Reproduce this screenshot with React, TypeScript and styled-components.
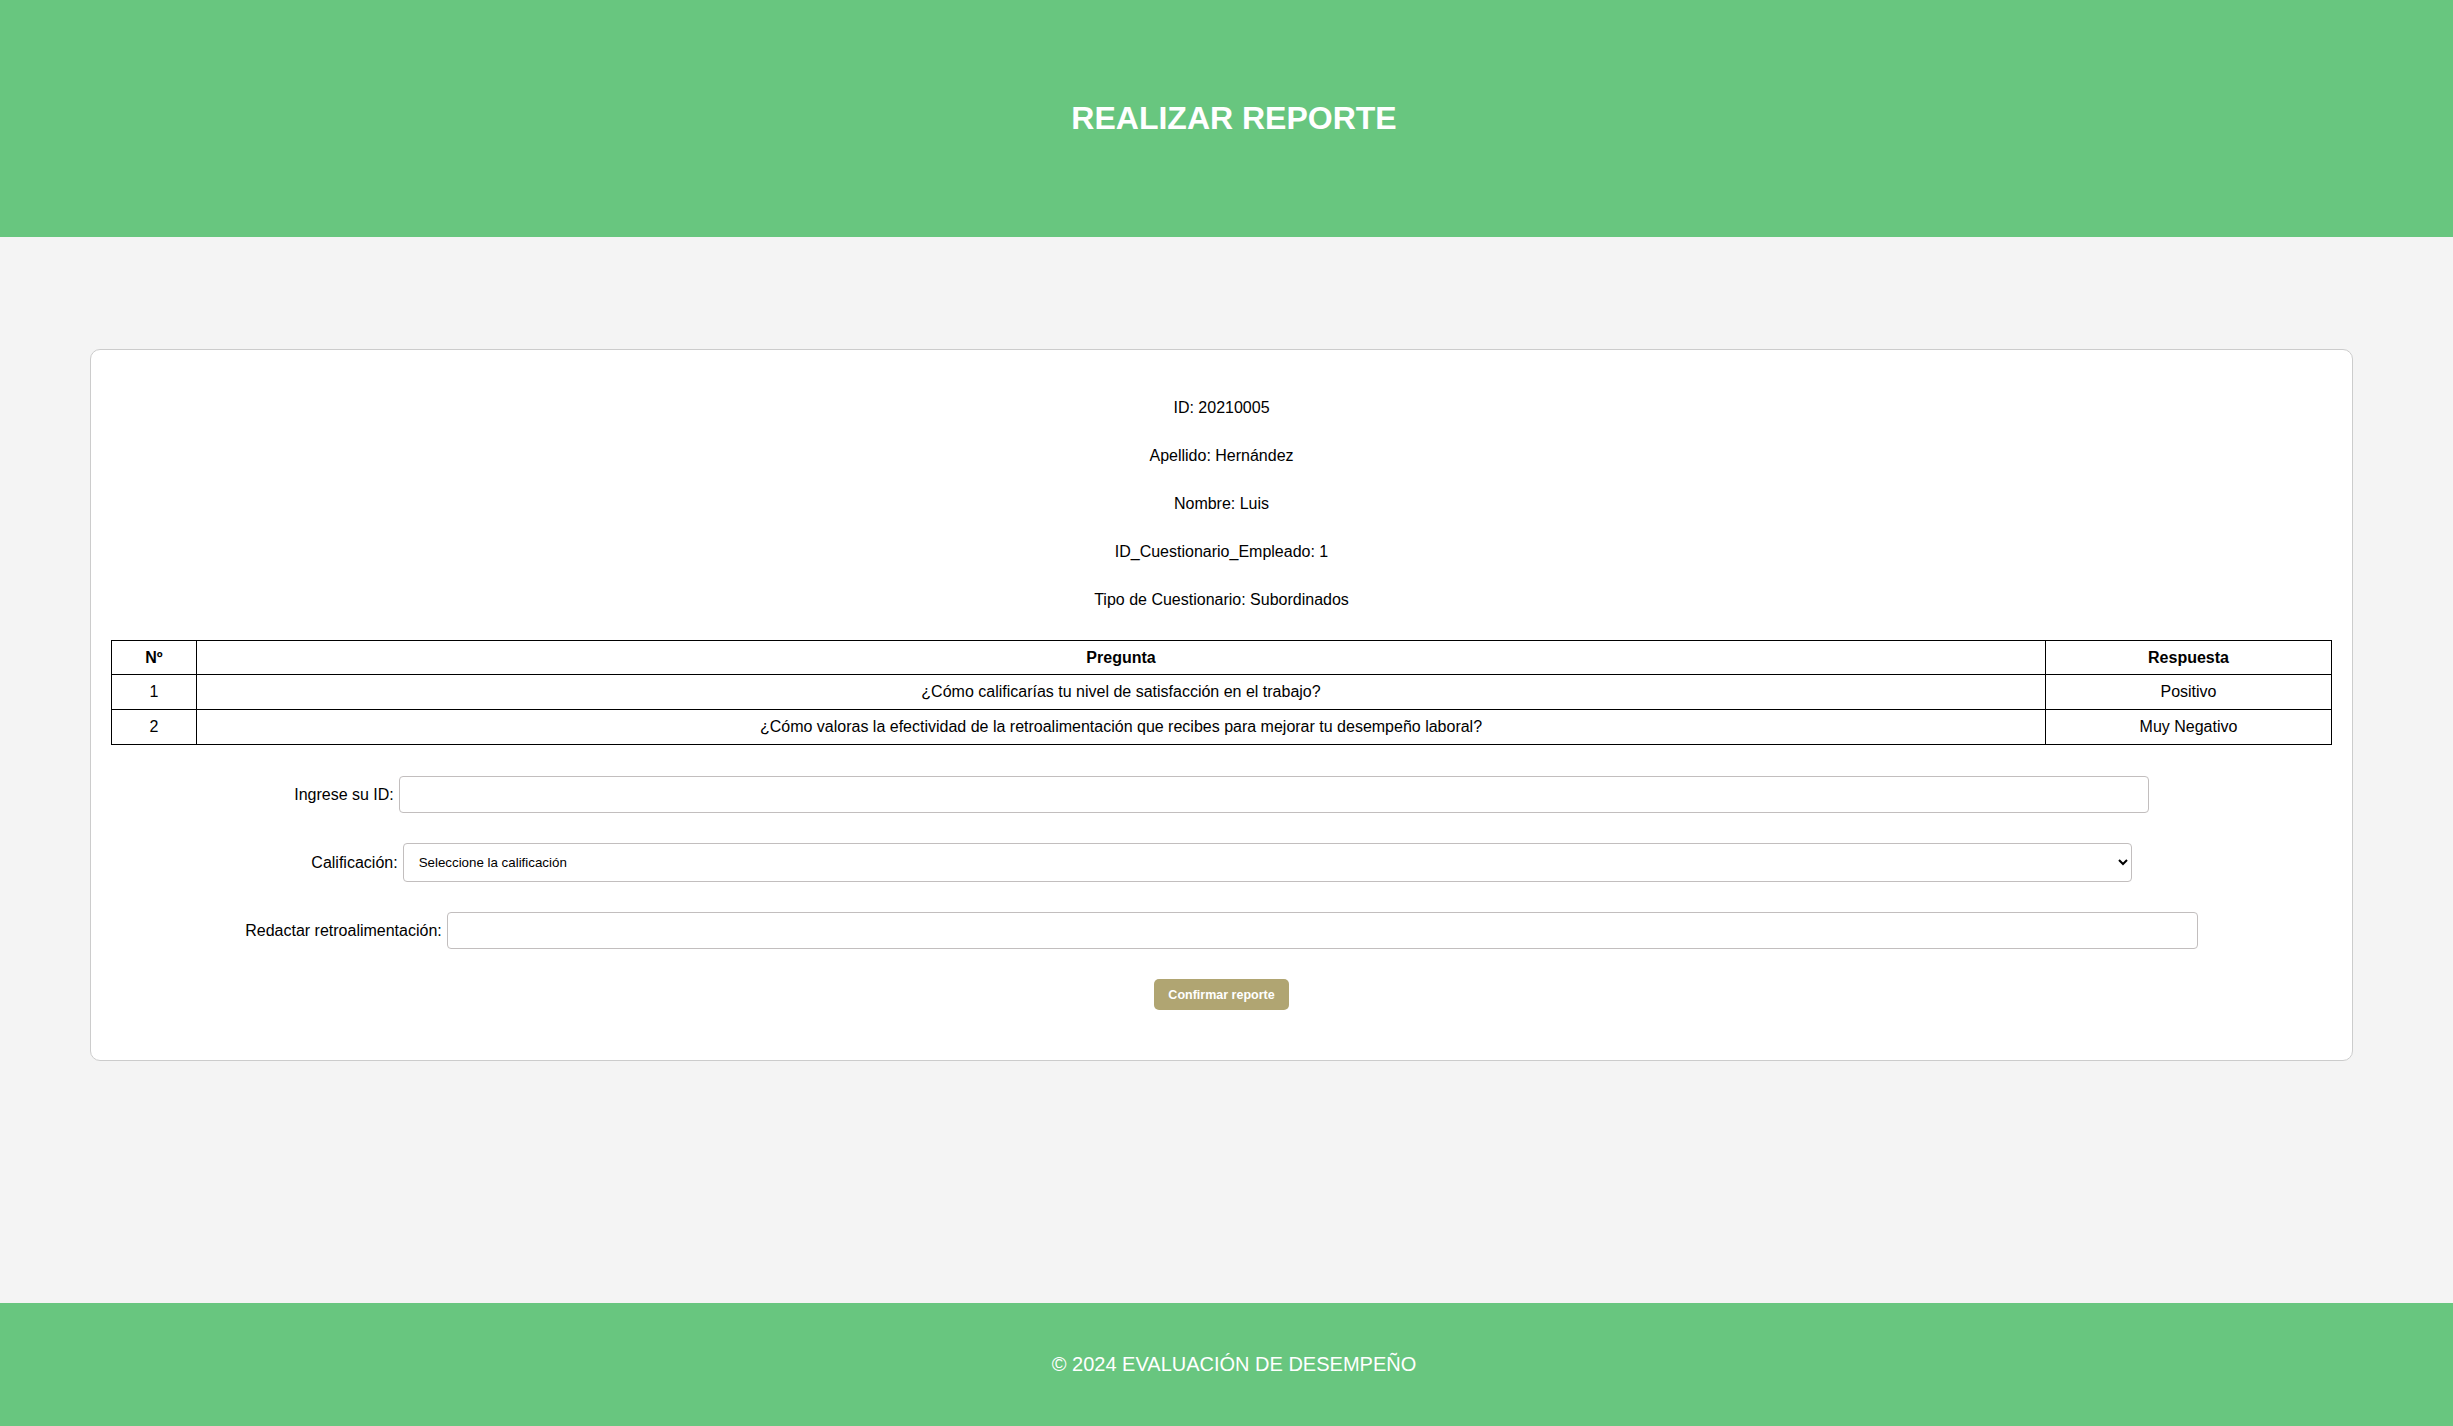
import React from "react";
import styled, { createGlobalStyle } from "styled-components";

const GlobalStyle = createGlobalStyle`
  html, body { margin: 0; padding: 0; }
  body {
    font-family: "Liberation Sans", Arial, sans-serif;
    background: #f4f4f4;
    color: #000;
  }
  * { box-sizing: border-box; }
`;

const Page = styled.div`
  min-height: 100vh;
  display: flex;
  flex-direction: column;
`;

const Header = styled.header`
  height: 237px;
  background: #68c67f;
  display: flex;
  align-items: center;
  justify-content: center;
  padding-left: 15px;
`;

const Title = styled.h1`
  margin: 0;
  color: #fff;
  font-size: 32px;
  font-weight: bold;
  line-height: 37px;
`;

const Main = styled.main`
  flex: 1;
  padding: 112px 100px 0 90px;
`;

const Card = styled.section`
  background: #fff;
  border: 1px solid #cccccc;
  border-radius: 10px;
  padding: 20px;
`;

const Info = styled.div`
  display: flex;
  flex-direction: column;
  align-items: center;
  gap: 30px;
  padding: 29px 0 31px;
`;

const InfoLine = styled.p`
  margin: 0;
  font-size: 16px;
  line-height: 18px;
`;

const Table = styled.table`
  width: 100%;
  border-collapse: collapse;
  font-size: 16px;
`;

const Th = styled.th<{ $w?: number }>`
  border: 1px solid #000;
  padding: 8px;
  line-height: 17px;
  text-align: center;
  font-weight: bold;
  ${(p) => (p.$w ? `width: ${p.$w}px;` : "")}
`;

const Td = styled.td`
  border: 1px solid #000;
  padding: 8px;
  line-height: 18px;
  text-align: center;
`;

const Form = styled.form`
  margin-top: 31px;
  padding-bottom: 30px;
  display: flex;
  flex-direction: column;
  align-items: center;
  gap: 30px;
`;

const Row = styled.div`
  display: flex;
  align-items: center;
  gap: 5px;
`;

const Label = styled.label`
  font-size: 16px;
  line-height: 18px;
`;

const TextInput = styled.input<{ $w: number }>`
  width: ${(p) => p.$w}px;
  height: 37px;
  border: 1px solid #c2bebe;
  border-radius: 4px;
  padding: 8px;
  font-family: "Liberation Sans", Arial, sans-serif;
  font-size: 13.333px;
  background: #fff;
  outline: none;
`;

const Select = styled.select`
  width: 1729px;
  height: 39px;
  border: 1px solid #c2bebe;
  border-radius: 4px;
  padding: 0 8px 0 11px;
  font-family: "Liberation Sans", Arial, sans-serif;
  font-size: 13.333px;
  color: #000;
  background: #fff;
`;

const Button = styled.button`
  width: 135px;
  height: 31px;
  border: none;
  border-radius: 5px;
  background: #b0a572;
  color: #fff;
  font-family: "Liberation Sans", Arial, sans-serif;
  font-size: 12.5px;
  font-weight: bold;
  cursor: pointer;
`;

const Footer = styled.footer`
  height: 123px;
  background: #68c67f;
  color: #fff;
  display: flex;
  align-items: center;
  justify-content: center;
  padding-left: 15px;
  font-size: 20px;
`;

const rows = [
  { n: 1, q: "¿Cómo calificarías tu nivel de satisfacción en el trabajo?", r: "Positivo" },
  {
    n: 2,
    q: "¿Cómo valoras la efectividad de la retroalimentación que recibes para mejorar tu desempeño laboral?",
    r: "Muy Negativo",
  },
];

export default function App() {
  return (
    <>
      <GlobalStyle />
      <Page>
        <Header>
          <Title>REALIZAR REPORTE</Title>
        </Header>
        <Main>
          <Card>
            <Info>
              <InfoLine>ID: 20210005</InfoLine>
              <InfoLine>Apellido: Hernández</InfoLine>
              <InfoLine>Nombre: Luis</InfoLine>
              <InfoLine>ID_Cuestionario_Empleado: 1</InfoLine>
              <InfoLine>Tipo de Cuestionario: Subordinados</InfoLine>
            </Info>
            <Table>
              <thead>
                <tr>
                  <Th $w={85}>Nº</Th>
                  <Th>Pregunta</Th>
                  <Th $w={286}>Respuesta</Th>
                </tr>
              </thead>
              <tbody>
                {rows.map((row) => (
                  <tr key={row.n}>
                    <Td>{row.n}</Td>
                    <Td>{row.q}</Td>
                    <Td>{row.r}</Td>
                  </tr>
                ))}
              </tbody>
            </Table>
            <Form onSubmit={(e) => e.preventDefault()}>
              <Row>
                <Label htmlFor="idEval">Ingrese su ID:</Label>
                <TextInput id="idEval" type="text" $w={1750} />
              </Row>
              <Row>
                <Label htmlFor="calif">Calificación:</Label>
                <Select id="calif" defaultValue="">
                  <option value="">Seleccione la calificación</option>
                  <option value="1">Muy Negativo</option>
                  <option value="2">Negativo</option>
                  <option value="3">Neutral</option>
                  <option value="4">Positivo</option>
                  <option value="5">Muy Positivo</option>
                </Select>
              </Row>
              <Row>
                <Label htmlFor="retro">Redactar retroalimentación:</Label>
                <TextInput id="retro" type="text" $w={1751} />
              </Row>
              <Button type="submit">Confirmar reporte</Button>
            </Form>
          </Card>
        </Main>
        <Footer>© 2024 EVALUACIÓN DE DESEMPEÑO</Footer>
      </Page>
    </>
  );
}
